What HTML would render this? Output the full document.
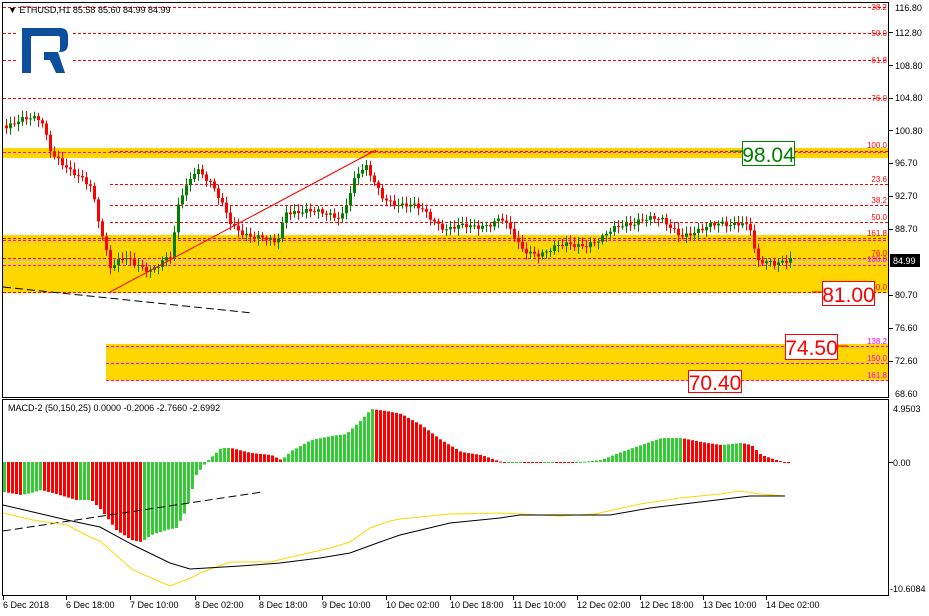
<!DOCTYPE html>
<html><head><meta charset="utf-8"><style>
html,body{margin:0;padding:0;background:#fff;width:929px;height:616px;overflow:hidden}
svg{display:block}
text{font-family:"Liberation Sans",sans-serif}
</style></head><body>
<svg id="s" width="929" height="616" xmlns="http://www.w3.org/2000/svg">
<rect width="929" height="616" fill="#fff"/>
<rect x="3" y="148" width="886" height="10" fill="#ffd700"/>
<rect x="3" y="235" width="886" height="58" fill="#ffd700"/>
<rect x="106" y="344" width="783" height="37" fill="#ffd700"/>
<g stroke="#ff0000" stroke-width="1" stroke-dasharray="3,2" fill="none">
<line x1="3" y1="7.5" x2="889" y2="7.5"/>
<line x1="3" y1="33.5" x2="889" y2="33.5"/>
<line x1="3" y1="60.5" x2="889" y2="60.5"/>
<line x1="3" y1="98.5" x2="889" y2="98.5"/>
<line x1="110" y1="184.5" x2="889" y2="184.5"/>
<line x1="110" y1="205.5" x2="889" y2="205.5"/>
<line x1="110" y1="222.5" x2="889" y2="222.5"/>
<line x1="3" y1="238.5" x2="889" y2="238.5"/>
<line x1="3" y1="258.5" x2="889" y2="258.5"/>
<line x1="3" y1="292.5" x2="889" y2="292.5"/>
<line x1="110" y1="151.5" x2="889" y2="151.5"/>
</g>
<g stroke="#ff00ff" stroke-width="1" stroke-dasharray="3,2" fill="none">
<line x1="3" y1="152.5" x2="889" y2="152.5"/>
<line x1="3" y1="240.5" x2="889" y2="240.5"/>
<line x1="3" y1="265.5" x2="889" y2="265.5"/>
<line x1="106" y1="346.5" x2="889" y2="346.5"/>
<line x1="106" y1="363.5" x2="889" y2="363.5"/>
<line x1="106" y1="380.5" x2="889" y2="380.5"/>
</g>
<line x1="3" y1="260.5" x2="889" y2="260.5" stroke="#c0c0c0"/>
<rect x="18" y="24" width="54" height="52" fill="#fff"/>
<path d="M22 28 H60 Q68 28 68 36 V44 Q68 52 60 52 H58 L65 73 H56 L50 60 H44 V52 H58 Q60 52 60 48 V38 Q60 36 58 36 H31 V73 H22 Z" fill="#0d4f9c"/>
<g id="candles"></g>
<line x1="110" y1="292" x2="376" y2="150" stroke="#ff0000" stroke-width="1"/>
<line x1="3" y1="287" x2="252" y2="313" stroke="#000" stroke-dasharray="8,4"/>
<g id="macd"></g>
<line x1="3" y1="531" x2="262" y2="492" stroke="#000" stroke-dasharray="8,4"/>
<polyline id="yl" fill="none" stroke="#ffd700" stroke-width="1"/>
<polyline id="bl" fill="none" stroke="#000" stroke-width="1"/>
<rect x="2.5" y="2.5" width="886" height="395" fill="none" stroke="#000"/>
<rect x="2.5" y="399.5" width="886" height="196" fill="none" stroke="#000"/>
<line x1="730" y1="151" x2="742" y2="151" stroke="#008000"/>
<rect x="742.5" y="141.5" width="52" height="24" fill="#fff" stroke="#008000"/>
<text x="768.5" y="162" font-size="21" fill="#008000" text-anchor="middle">98.04</text>
<line x1="812" y1="292" x2="822" y2="292" stroke="#ff0000"/>
<rect x="822.5" y="281.5" width="52" height="24" fill="#fff" stroke="#ff0000"/>
<text x="848.5" y="302" font-size="21" fill="#ff0000" text-anchor="middle">81.00</text>
<line x1="837" y1="346" x2="848" y2="346" stroke="#ff0000"/>
<rect x="785.5" y="334.5" width="52" height="25" fill="#fff" stroke="#ff0000"/>
<text x="811.5" y="355" font-size="21" fill="#ff0000" text-anchor="middle">74.50</text>
<rect x="688.5" y="370.5" width="53" height="22" fill="#fff" stroke="#ff0000"/>
<text x="715" y="390" font-size="21" fill="#ff0000" text-anchor="middle">70.40</text>
<g font-size="8" fill="#ff0000" text-anchor="end">
<text x="887" y="10">38.2</text><text x="887" y="36">50.0</text><text x="887" y="63">61.8</text><text x="887" y="101">76.0</text>
<text x="887" y="148">100.0</text><text x="887" y="182">23.6</text><text x="887" y="203">38.2</text><text x="887" y="220">50.0</text>
<text x="887" y="236">161.8</text><text x="887" y="256">76.0</text><text x="887" y="290">0.0</text>
</g>
<g font-size="8" fill="#ff00ff" text-anchor="end">
<text x="887" y="262">100.0</text><text x="887" y="344">138.2</text><text x="887" y="361">150.0</text><text x="887" y="378">161.8</text>
</g>
<g font-size="9" fill="#000">
<text x="895" y="11">116.80</text><text x="895" y="36">112.80</text><text x="895" y="69">108.80</text><text x="895" y="101">104.80</text>
<text x="895" y="134">100.80</text><text x="895" y="166">96.70</text><text x="895" y="199">92.70</text><text x="895" y="232">88.70</text>
<text x="895" y="298">80.70</text><text x="895" y="331">76.60</text><text x="895" y="364">72.60</text><text x="895" y="397">68.60</text>
<text x="893" y="412">4.9503</text><text x="893" y="466">0.00</text><text x="890" y="592">-10.6084</text>
</g>
<g stroke="#000"><line x1="889" y1="32.5" x2="893" y2="32.5"/><line x1="889" y1="65.5" x2="893" y2="65.5"/><line x1="889" y1="98.5" x2="893" y2="98.5"/><line x1="889" y1="130.5" x2="893" y2="130.5"/><line x1="889" y1="163.5" x2="893" y2="163.5"/><line x1="889" y1="196.5" x2="893" y2="196.5"/><line x1="889" y1="229.5" x2="893" y2="229.5"/><line x1="889" y1="295.5" x2="893" y2="295.5"/><line x1="889" y1="328.5" x2="893" y2="328.5"/><line x1="889" y1="361.5" x2="893" y2="361.5"/><line x1="889" y1="462.5" x2="893" y2="462.5"/></g>
<rect x="890" y="254" width="30" height="13" fill="#000"/>
<text x="893" y="264" font-size="9" fill="#fff">84.99</text>
<text x="8" y="13" font-size="9" fill="#000">▼ ETHUSD,H1  85.58 85.60 84.99 84.99</text>
<text x="8" y="411" font-size="9" fill="#000">MACD-2 (50,150,25) 0.0000 -0.2006 -2.7660 -2.6992</text>
<g font-size="9" fill="#000">
<text x="3" y="608">6 Dec 2018</text><text x="66" y="608">6 Dec 18:00</text><text x="130" y="608">7 Dec 10:00</text><text x="195" y="608">8 Dec 02:00</text><text x="259" y="608">8 Dec 18:00</text><text x="322" y="608">9 Dec 10:00</text><text x="386" y="608">10 Dec 02:00</text><text x="450" y="608">10 Dec 18:00</text><text x="513" y="608">11 Dec 10:00</text><text x="577" y="608">12 Dec 02:00</text><text x="640" y="608">12 Dec 18:00</text><text x="703" y="608">13 Dec 10:00</text><text x="766" y="608">14 Dec 02:00</text>
</g>
<g stroke="#000" id="ticks"></g>
</svg>
<script>
(function(){
var NS="http://www.w3.org/2000/svg";
function el(p,t,a){var e=document.createElementNS(NS,t);for(var k in a)e.setAttribute(k,String(a[k]));p.appendChild(e);return e;}
function interp(pts,x){for(var i=1;i<pts.length;i++){if(x<=pts[i][0]){var a=pts[i-1],b=pts[i];return a[1]+(b[1]-a[1])*(x-a[0])/(b[0]-a[0]);}}return pts[pts.length-1][1];}
var price=[[5,125],[30,120],[40,118],[50,150],[70,175],[90,185],[100,230],[110,270],[120,260],[150,268],[170,258],[178,200],[195,165],[210,185],[230,225],[250,235],[275,245],[285,210],[300,210],[320,215],[340,215],[355,175],[365,170],[380,195],[400,205],[420,210],[445,228],[470,228],[500,218],[520,250],[540,252],[570,245],[600,240],[620,225],[640,218],[660,222],[680,233],[700,232],[720,222],[740,222],[750,232],[755,265],[765,262],[790,258]];
var cg=document.getElementById('candles');
var prev=interp(price,3);
for(var x=5;x<=790;x+=4){
 var c=interp(price,x)+Math.sin(x*1.7)*3+Math.sin(x*0.53)*2;
 var o=prev; prev=c;
 var bt=Math.min(o,c),bb=Math.max(o,c);
 var col=(c<o)?"#008000":"#ff0000";
 var hi=bt-2-Math.abs(Math.sin(x*2.3))*5, lo=bb+2+Math.abs(Math.cos(x*1.1))*5;
 el(cg,'rect',{x:x+1,y:hi.toFixed(1),width:1,height:(lo-hi).toFixed(1),fill:col});
 el(cg,'rect',{x:x,y:bt.toFixed(1),width:3,height:Math.max(1,bb-bt).toFixed(1),fill:col});
}
var mh=[[3,492],[20,495],[30,493],[40,490],[55,494],[75,500],[90,500],[100,510],[115,530],[130,540],[140,542],[150,535],[165,530],[175,528],[185,510],[195,475],[205,462],[220,448],[230,448],[250,453],[270,455],[280,460],[290,451],[310,440],[330,436],[345,434],[360,420],[370,409],[385,411],[400,414],[420,425],[440,440],[460,452],[480,455],[500,462],[520,462],[540,463],[550,462],[570,463],[600,460],[620,452],[640,445],[660,438],[680,438],[700,442],[720,445],[740,443],[750,445],[760,455],[775,460],[790,464]];
var mg=document.getElementById('macd');var pv=null;
for(var x2=3;x2<=790;x2+=4){var v=interp(mh,x2);var col2=(pv===null||v<=pv)?"#32cd32":"#ff0000";pv=v;
 var t=Math.min(v,462),h=Math.max(1,Math.abs(v-462));el(mg,'rect',{x:x2,y:t.toFixed(1),width:3,height:h.toFixed(1),fill:col2});}
var yl=[[3,513],[33,520],[67,525],[90,537],[100,541],[133,570],[170,586],[193,577],[200,573],[230,562],[270,562],[300,555],[330,548],[350,542],[370,528],[390,521],[400,519],[450,514],[500,513],[540,515],[560,516],[595,514],[640,504],[680,498],[720,494],[740,491],[760,494],[785,496]];
var bl=[[3,505],[33,512],[67,520],[100,527],[133,545],[170,563],[190,569],[240,566],[280,563],[320,558],[350,553],[380,542],[400,535],[450,523],[500,518],[520,515],[610,515],[650,508],[700,502],[750,496],[785,496]];
document.getElementById('yl').setAttribute('points',yl.map(function(p){return p.join(',')}).join(' '));
document.getElementById('bl').setAttribute('points',bl.map(function(p){return p.join(',')}).join(' '));
var tg=document.getElementById('ticks');
[3,66,130,195,259,322,386,450,513,577,640,703,766].forEach(function(xx){el(tg,'line',{x1:xx+0.5,y1:596,x2:xx+0.5,y2:600});});
})();
</script>
</body></html>
